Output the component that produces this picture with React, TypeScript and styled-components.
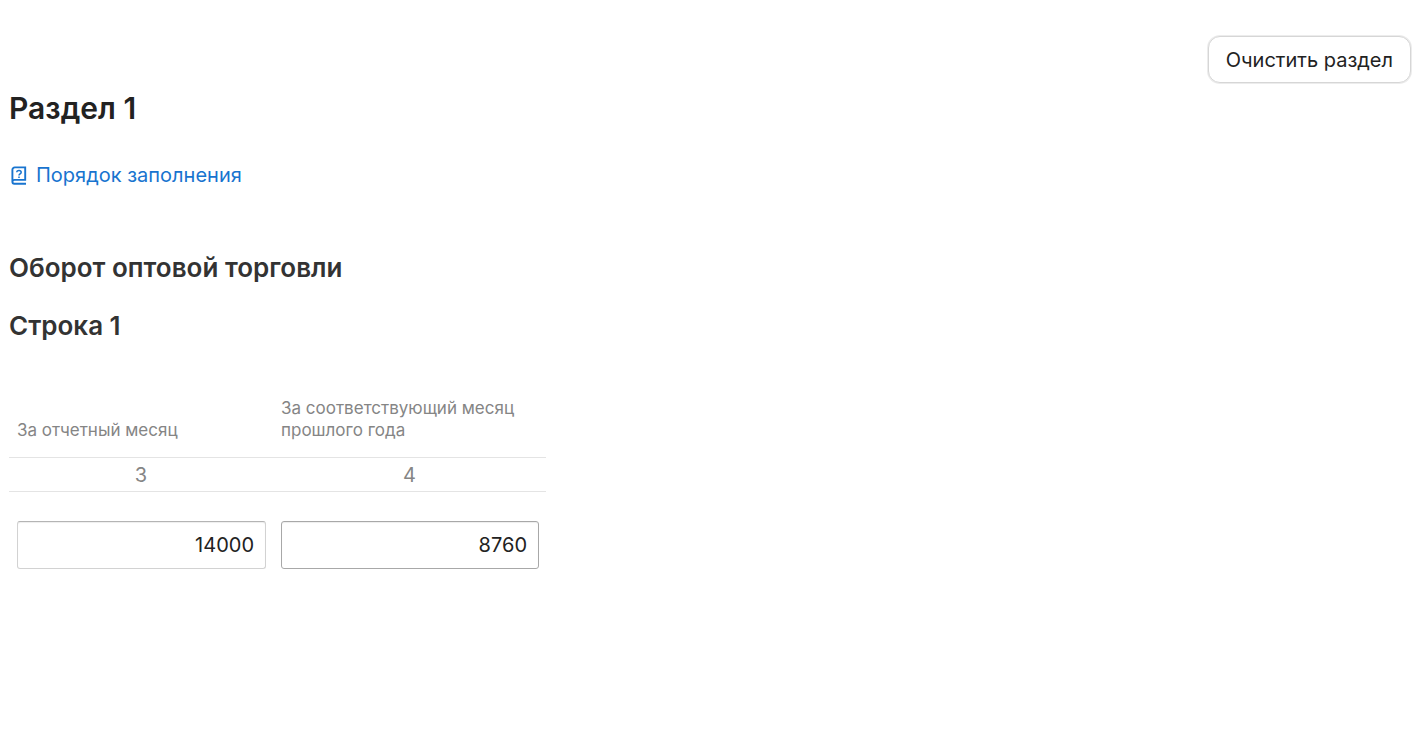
import React from "react";
import styled, { createGlobalStyle } from "styled-components";

const GlobalStyle = createGlobalStyle`
  *, *::before, *::after { box-sizing: border-box; }
  body {
    margin: 0;
    background: #fff;
    color: #222;
    font-family: Inter, "Liberation Sans", sans-serif;
    font-size: 20px;
    line-height: 28px;
  }
`;

const Page = styled.main`
  padding: 36px 7px 36px 9px;
`;

const Toolbar = styled.div`
  display: flex;
  justify-content: flex-end;
`;

const ClearButton = styled.button`
  height: 47px;
  padding: 0 17px;
  border: 1px solid #d6d6d6;
  border-radius: 12px;
  box-shadow: 0 0 0 1px #ececec;
  background: #fff;
  color: #222;
  font: inherit;
  cursor: pointer;
`;

const Title = styled.h1`
  margin: 5px 0 0;
  font-size: 30px;
  line-height: 40px;
  font-weight: 600;
`;

const GuideLink = styled.a`
  display: flex;
  align-items: center;
  gap: 8px;
  width: fit-content;
  margin-top: 33px;
  color: #1874cf;
  text-decoration: none;
`;

const Heading = styled.h2<{ $gap: number }>`
  margin: ${(p) => p.$gap}px 0 0;
  color: #333;
  font-size: 26px;
  line-height: 36px;
  font-weight: 600;
`;

const Table = styled.table`
  width: 537px;
  max-width: 100%;
  margin-top: 53px;
  border-collapse: separate;
  border-spacing: 0;
  table-layout: fixed;
`;

const CurrentColumn = styled.col`
  width: 264px;
`;

const HeadCell = styled.th`
  padding: 0 8px 16px;
  border-bottom: 1px solid #e4e4e4;
  color: #858585;
  font-size: 17px;
  line-height: 22px;
  font-weight: 400;
  text-align: left;
  vertical-align: bottom;
`;

const NumberCell = styled.td`
  height: 34px;
  padding: 0;
  border-bottom: 1px solid #e4e4e4;
  color: #858585;
  text-align: center;
`;

const InputCell = styled.td`
  padding: 29px 7px 0 8px;
`;

const AmountInput = styled.input<{ $strong?: boolean }>`
  display: block;
  width: 100%;
  height: 48px;
  padding: 0 11px;
  border: 1px solid ${(p) => (p.$strong ? "#a8a8a8" : "#d2d2d2")};
  border-top-color: ${(p) => (p.$strong ? "#a8a8a8" : "#b4b4b4")};
  border-radius: 3px;
  box-shadow: inset 0 1px 1px #eee;
  background: #fff;
  color: #222;
  font: inherit;
  text-align: right;
  outline: none;
`;

const BookIcon = () => (
  <svg width="19" height="20" viewBox="0 0 19 20" fill="none" stroke="currentColor" aria-hidden="true">
    <path
      d="M17 18.700H5.300a1.900 1.900 0 0 1 0-3.800H16.200V2.400H5.800a2.400 2.400 0 0 0-2.400 2.400v12"
      strokeWidth="1.900"
    />
    <path d="M7.800 7.200C7.800 4.900 12.200 4.900 12.200 7.300C12.200 8.900 10 8.900 10 10.600M10 11.600v1.500" strokeWidth="1.500" />
  </svg>
);

export default function App() {
  return (
    <>
      <GlobalStyle />
      <Page>
        <Toolbar>
          <ClearButton type="button">Очистить раздел</ClearButton>
        </Toolbar>
        <Title>Раздел 1</Title>
        <GuideLink href="#guide">
          <BookIcon />
          Порядок заполнения
        </GuideLink>
        <Heading $gap={61}>Оборот оптовой торговли</Heading>
        <Heading as="h3" $gap={22}>Строка 1</Heading>
        <Table>
          <colgroup>
            <CurrentColumn />
            <col />
          </colgroup>
          <thead>
            <tr>
              <HeadCell scope="col" id="current">За отчетный месяц</HeadCell>
              <HeadCell scope="col" id="previous">За соответствующий месяц прошлого года</HeadCell>
            </tr>
          </thead>
          <tbody>
            <tr>
              <NumberCell>3</NumberCell>
              <NumberCell>4</NumberCell>
            </tr>
            <tr>
              <InputCell>
                <AmountInput type="text" inputMode="numeric" aria-labelledby="current" defaultValue="14000" />
              </InputCell>
              <InputCell>
                <AmountInput $strong type="text" inputMode="numeric" aria-labelledby="previous" defaultValue="8760" />
              </InputCell>
            </tr>
          </tbody>
        </Table>
      </Page>
    </>
  );
}
